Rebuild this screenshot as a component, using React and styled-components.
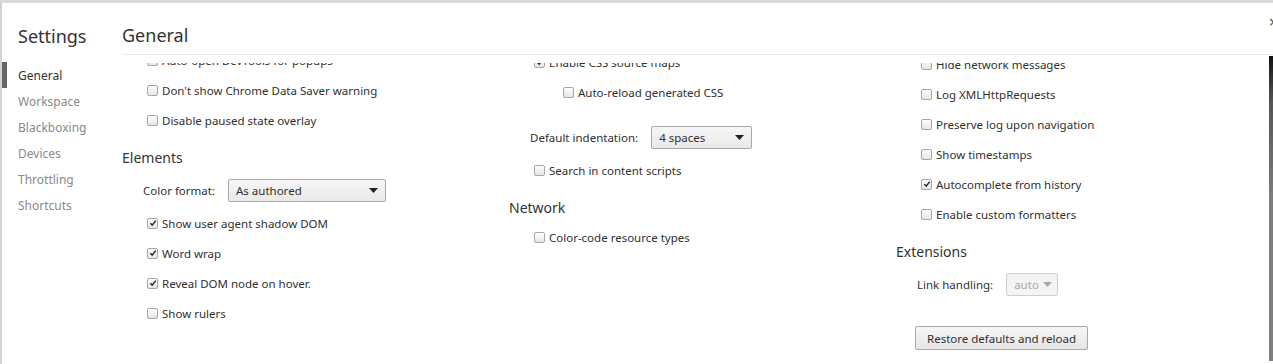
import { useLayoutEffect, useRef } from 'react';
import styled, { createGlobalStyle } from 'styled-components';

const GlobalStyle = createGlobalStyle`
  html, body {
    margin: 0;
    padding: 0;
    background: #fff;
  }
  body {
    font-family: "Noto Sans", "Open Sans", sans-serif;
    font-size: 11.5px;
    color: #303030;
  }
`;

const TABS = ['General', 'Workspace', 'Blackboxing', 'Devices', 'Throttling', 'Shortcuts'];

const COLUMNS = [
  {
    lead: 0,
    sections: [
      {
        title: 'Appearance',
        items: [
          { type: 'select', label: 'Theme:', value: 'Default', width: 120 },
          { type: 'select', label: 'Panel layout:', value: 'auto', width: 80 },
          { type: 'check', label: 'Auto-open DevTools for popups' },
          { type: 'check', label: "Don't show Chrome Data Saver warning" },
          { type: 'check', label: 'Disable paused state overlay' },
        ],
      },
      {
        title: 'Elements',
        items: [
          { type: 'select', label: 'Color format:', value: 'As authored', width: 158 },
          { type: 'check', label: 'Show user agent shadow DOM', checked: true },
          { type: 'check', label: 'Word wrap', checked: true },
          { type: 'check', label: 'Reveal DOM node on hover.', checked: true },
          { type: 'check', label: 'Show rulers' },
        ],
      },
    ],
  },
  {
    lead: 14,
    sections: [
      {
        title: 'Sources',
        items: [
          { type: 'check', label: 'Automatically reveal files in navigator' },
          { type: 'check', label: 'Enable JavaScript source maps', checked: true },
          { type: 'check', label: 'Enable CSS source maps', checked: true },
          { type: 'check', label: 'Auto-reload generated CSS', nested: true },
          { type: 'select', label: 'Default indentation:', value: '4 spaces', width: 101, spaced: true },
          { type: 'check', label: 'Search in content scripts' },
        ],
      },
      {
        title: 'Network',
        items: [{ type: 'check', label: 'Color-code resource types' }],
      },
    ],
  },
  {
    lead: 16,
    sections: [
      {
        title: 'Console',
        items: [
          { type: 'check', label: 'Show network messages' },
          { type: 'check', label: 'Show error messages', checked: true },
          { type: 'check', label: 'Hide network messages' },
          { type: 'check', label: 'Log XMLHttpRequests' },
          { type: 'check', label: 'Preserve log upon navigation' },
          { type: 'check', label: 'Show timestamps' },
          { type: 'check', label: 'Autocomplete from history', checked: true },
          { type: 'check', label: 'Enable custom formatters' },
        ],
      },
      {
        title: 'Extensions',
        items: [{ type: 'select', label: 'Link handling:', value: 'auto', width: 52, disabled: true }],
        button: 'Restore defaults and reload',
      },
    ],
  },
];

const CheckBox = ({ checked }) => (
  <StBox>
    {checked && (
      <svg width="8" height="8" viewBox="0 0 9 9">
        <path d="M1.5 4.8 L3.6 6.9 L7.6 1.8" fill="none" stroke="#2a2a2a" strokeWidth="1.7" />
      </svg>
    )}
  </StBox>
);

const SelectBox = ({ value, width, disabled }) => (
  <StSelect $width={width} $disabled={disabled}>
    <span>{value}</span>
    <StArrow width="9" height="5" viewBox="0 0 9 5">
      <path d="M0 0 H9 L4.5 5 Z" fill={disabled ? '#a8a8a8' : '#222'} />
    </StArrow>
  </StSelect>
);

const Item = ({ item }) => {
  if (item.type === 'select') {
    return (
      <StSelectRow $spaced={item.spaced}>
        <StSelectLabel>{item.label}</StSelectLabel>
        <SelectBox value={item.value} width={item.width} disabled={item.disabled} />
      </StSelectRow>
    );
  }
  return (
    <StCheckRow $nested={item.nested}>
      <CheckBox checked={item.checked} />
      <span>{item.label}</span>
    </StCheckRow>
  );
};

const App = () => {
  const scrollRef = useRef(null);

  useLayoutEffect(() => {
    if (scrollRef.current) scrollRef.current.scrollTop = 127;
  }, []);

  return (
    <>
      <GlobalStyle />
      <StDialog>
        <StSidebar>
          <StTitle>Settings</StTitle>
          <StTabs>
            {TABS.map((tab, index) => (
              <StTab key={tab} $selected={index === 0}>
                {tab}
              </StTab>
            ))}
          </StTabs>
        </StSidebar>
        <StMain>
          <StHeader>General</StHeader>
          <StScroll ref={scrollRef}>
            <StColumns>
              {COLUMNS.map((column, index) => (
                <StColumn key={index} $lead={column.lead}>
                  {column.sections.map((section) => (
                    <section key={section.title}>
                      <StSectionTitle>{section.title}</StSectionTitle>
                      {section.items.map((item) => (
                        <Item key={item.label} item={item} />
                      ))}
                      {section.button && <StButton>{section.button}</StButton>}
                    </section>
                  ))}
                </StColumn>
              ))}
            </StColumns>
          </StScroll>
          <StScrollThumb />
        </StMain>
        <StClose>×</StClose>
      </StDialog>
    </>
  );
};

export default App;

const StDialog = styled.div`
  position: relative;
  display: flex;
  height: 364px;
  box-sizing: border-box;
  border-top: 3px solid #dadada;
  border-left: 2px solid #d2d2d2;
  overflow: hidden;
`;

const StSidebar = styled.div`
  width: 120px;
  flex-shrink: 0;
`;

const StTitle = styled.div`
  height: 52px;
  padding: 22px 0 0 16px;
  box-sizing: border-box;
  font-size: 18px;
  line-height: 22px;
  color: #333;
`;

const StTabs = styled.ul`
  list-style: none;
  margin: 0;
  padding: 7px 0 0;
`;

const StTab = styled.li`
  height: 26px;
  line-height: 28px;
  padding-left: 11px;
  font-size: 12px;
  color: ${(props) => (props.$selected ? '#333' : '#8a8a8a')};
  border-left: 5px solid ${(props) => (props.$selected ? '#666' : 'transparent')};
`;

const StMain = styled.div`
  position: relative;
  flex: 1;
  display: flex;
  flex-direction: column;
  min-width: 0;
`;

const StHeader = styled.div`
  height: 52px;
  flex-shrink: 0;
  padding-top: 21px;
  box-sizing: border-box;
  border-bottom: 1px solid #ececec;
  font-size: 18px;
  line-height: 22px;
  color: #333;
`;

const StScroll = styled.div`
  flex: 1;
  margin-top: 8px;
  overflow: hidden;
`;

const StColumns = styled.div`
  display: grid;
  grid-template-columns: 387px 387px 1fr;
  padding-bottom: 40px;
`;

const StColumn = styled.div`
  padding-top: ${(props) => props.$lead}px;
`;

const StSectionTitle = styled.div`
  margin: 14px 0 7px;
  height: 16px;
  line-height: 17px;
  font-size: 14px;
  color: #333;
`;

const StCheckRow = styled.div`
  display: flex;
  align-items: center;
  height: 30px;
  padding-left: ${(props) => (props.$nested ? 54 : 25)}px;
  white-space: nowrap;
`;

const StBox = styled.span`
  display: inline-flex;
  align-items: center;
  justify-content: center;
  width: 9px;
  height: 9px;
  margin-right: 4px;
  border: 1px solid #a6a6a6;
  border-radius: 2px;
  background: linear-gradient(#fdfdfd, #e6e6e6);
  flex-shrink: 0;
`;

const StSelectRow = styled.div`
  display: flex;
  align-items: center;
  height: 36px;
  margin-top: ${(props) => (props.$spaced ? 12 : 0)}px;
  padding-left: 21px;
  white-space: nowrap;
`;

const StSelectLabel = styled.span`
  margin-right: 13px;
`;

const StSelect = styled.div`
  display: flex;
  align-items: center;
  justify-content: space-between;
  gap: 4px;
  width: ${(props) => props.$width}px;
  height: 23px;
  box-sizing: border-box;
  padding: 0 7px 0 7px;
  border: 1px solid ${(props) => (props.$disabled ? '#cfcfcf' : '#a9a9a9')};
  border-radius: 2px;
  background: ${(props) => (props.$disabled ? '#f4f4f4' : 'linear-gradient(#f6f6f6, #e9e9e9)')};
  color: ${(props) => (props.$disabled ? '#a8a8a8' : '#303030')};
`;

const StArrow = styled.svg`
  flex-shrink: 0;
`;

const StButton = styled.button`
  display: block;
  margin: 24px 0 0 19px;
  height: 24px;
  padding: 0 11px;
  border: 1px solid #a9a9a9;
  border-radius: 2px;
  background: linear-gradient(#f6f6f6, #e6e6e6);
  font-family: inherit;
  font-size: 11.5px;
  color: #303030;
`;

const StScrollThumb = styled.div`
  position: absolute;
  right: 0;
  top: 53px;
  width: 4px;
  height: 305px;
  background: linear-gradient(#111 0%, #555 15%, #7c7c7c 45%, #808080 100%);
`;

const StClose = styled.div`
  position: absolute;
  top: 8px;
  right: -5px;
  font-size: 16px;
  color: #555;
`;
